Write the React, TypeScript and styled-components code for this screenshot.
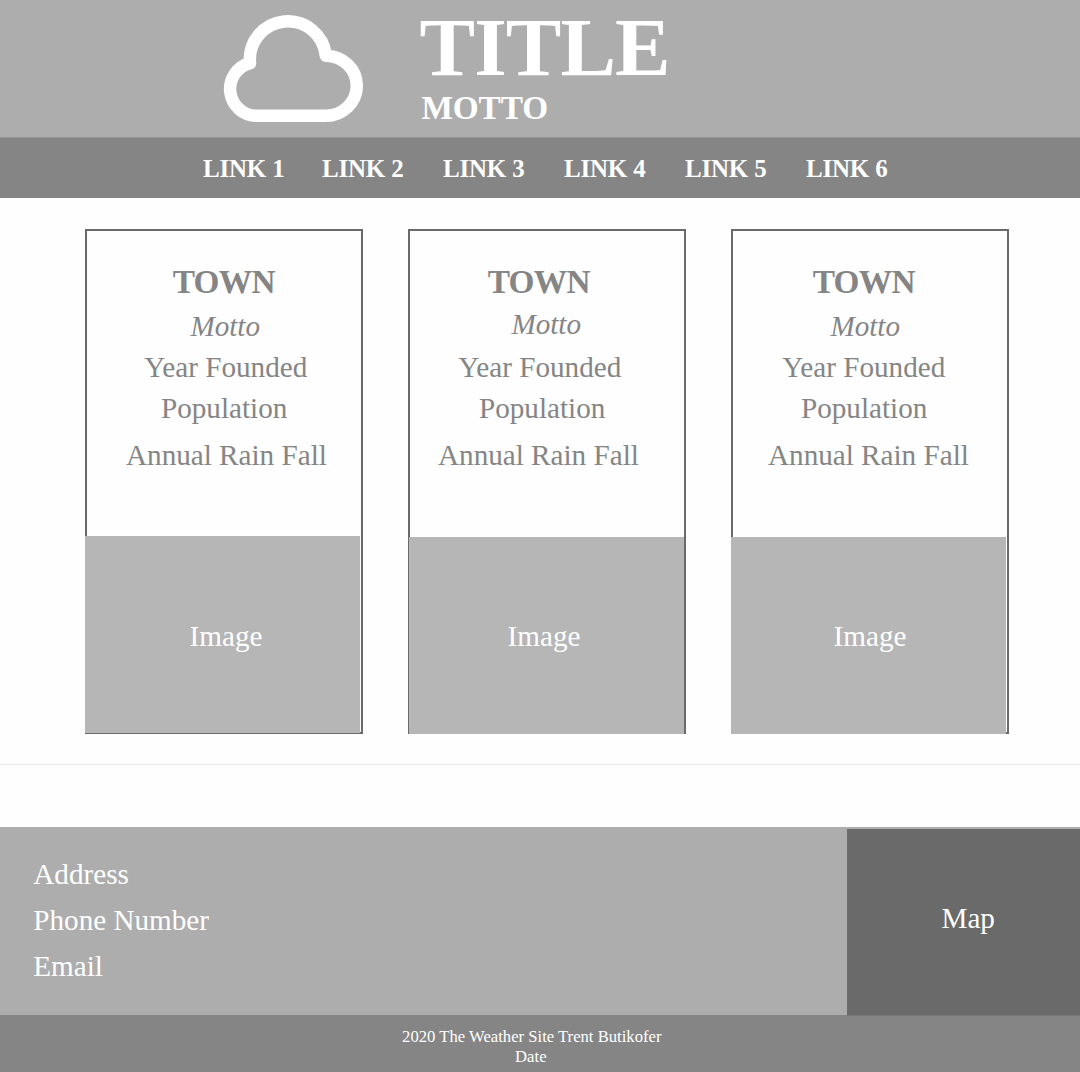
import React from "react";
import styled, { createGlobalStyle } from "styled-components";

const GlobalStyle = createGlobalStyle`
  * { box-sizing: border-box; }
  body { margin: 0; background: #fefefe; font-family: "Liberation Serif", "Times New Roman", serif; }
  h1, h2, p { margin: 0; font-weight: inherit; }
`;

const Page = styled.div`
  width: 1080px;
  height: 1072px;
  display: flex;
  flex-direction: column;
  overflow: hidden;
`;

const Header = styled.header`
  height: 138px;
  background: #adadad;
  border-bottom: 1px solid #949494;
  display: flex;
  align-items: flex-start;
  gap: 56px;
  padding: 15px 0 0 223px;
  color: #fff;
`;

const Logo = styled.svg`
  width: 141px;
  height: 108px;
  flex: none;
`;

const Brand = styled.div`
  display: flex;
  flex-direction: column;
  margin-top: -10px;
  font-weight: bold;
`;

const Title = styled.h1`
  && { font-weight: bold; }
  font-size: 83.33px;
  line-height: 84px;
  letter-spacing: -0.9px;
  margin-left: -0.5px;
`;

const Tagline = styled.p`
  font-size: 33.33px;
  line-height: 38px;
  margin-left: 1.4px;
  letter-spacing: -0.1px;
`;

const Nav = styled.nav`
  height: 60px;
  background: #858585;
  display: flex;
  padding-left: 203px;
`;

const NavLink = styled.a<{ $width: number }>`
  width: ${(p) => p.$width}px;
  color: #fff;
  font-size: 25px;
  font-weight: bold;
  line-height: 62px;
  letter-spacing: -0.2px;
  white-space: nowrap;
`;

const Cards = styled.main`
  display: flex;
  gap: 45px;
  height: 567px;
  padding: 31px 0 0 85px;
  border-bottom: 1px solid #e8e8e8;
`;

const Card = styled.article`
  width: 278px;
  height: 505px;
  border: 2px solid #6a6a6a;
  padding-top: 31px;
  display: flex;
  flex-direction: column;
  color: #858585;
`;

const TownName = styled.h2<{ $indent: number }>`
  && { font-weight: bold; }
  font-size: 33.33px;
  line-height: 40px;
  letter-spacing: -0.7px;
  margin-left: ${(p) => p.$indent}px;
`;

const Line = styled.p<{ $indent: number; $gap: number; $italic?: boolean }>`
  font-size: 29.17px;
  line-height: 32px;
  font-style: ${(p) => (p.$italic ? "italic" : "normal")};
  margin-top: ${(p) => p.$gap}px;
  margin-left: ${(p) => p.$indent}px;
  white-space: nowrap;
`;

const Photo = styled.div<{ $shift: number; $gap: number; $indent: number; $drop: number }>`
  width: 275px;
  height: 197px;
  flex: none;
  margin-top: ${(p) => p.$gap}px;
  margin-left: ${(p) => p.$shift}px;
  padding: ${(p) => p.$drop}px 0 0 ${(p) => p.$indent}px;
  background: #b6b6b6;
  color: #fff;
  font-size: 29.17px;
  line-height: 32px;
`;

const Contact = styled.section`
  height: 188px;
  margin-top: 62px;
  background: #adadad;
  color: #fff;
  display: flex;
  justify-content: space-between;
`;

const ContactList = styled.div`
  padding: 24px 0 0 33.3px;
  font-size: 29.17px;
  line-height: 46px;
`;

const MapBox = styled.div`
  position: relative;
  width: 233px;
  height: 187px;
  margin-top: 2px;
  padding: 73px 0 0 94.5px;
  background: #6a6a6a;
  border-bottom: 1px solid #787878;
  font-size: 29.17px;
  line-height: 32px;
`;

const Footer = styled.footer`
  height: 57px;
  background: #858585;
  color: #fff;
  padding: 12px 16.4px 0 0;
  font-size: 16.67px;
  line-height: 20px;
  text-align: center;
`;

const FooterDate = styled.p`
  padding-right: 2px;
`;

const links = [
  { label: "LINK 1", width: 119 },
  { label: "LINK 2", width: 121 },
  { label: "LINK 3", width: 121 },
  { label: "LINK 4", width: 121 },
  { label: "LINK 5", width: 121 },
  { label: "LINK 6", width: 90 },
];

// Left indents of the five lines of each card, then the offsets of its photo.
const towns = [
  { text: [85.7, 103.4, 57.2, 74, 39], mottoGap: 8, photo: { shift: -2, gap: 65, indent: 104.6, drop: 84 } },
  { text: [77.7, 101.4, 48.2, 69, 28], mottoGap: 6, photo: { shift: -1, gap: 66, indent: 98.6, drop: 83 } },
  { text: [79.7, 97.4, 49.2, 68, 35], mottoGap: 8, photo: { shift: -2, gap: 66, indent: 102.6, drop: 83 } },
];

function Cloud() {
  return (
    <Logo viewBox="223 15 141 108" fill="none" stroke="#fff" strokeWidth="12.5" strokeLinejoin="round">
      <path d="M250 63.1 A38 38 0 0 1 325.8 55.7 A31 30.1 0 0 1 356.8 85.8 A31 30.1 0 0 1 325.8 115.8 H257 A26.8 26.8 0 0 1 250 63.1 Z" />
    </Logo>
  );
}

export default function App() {
  return (
    <Page>
      <GlobalStyle />
      <Header>
        <Cloud />
        <Brand>
          <Title>TITLE</Title>
          <Tagline>MOTTO</Tagline>
        </Brand>
      </Header>
      <Nav>
        {links.map((l) => (
          <NavLink key={l.label} $width={l.width}>{l.label}</NavLink>
        ))}
      </Nav>
      <Cards>
        {towns.map(({ text, mottoGap, photo }, i) => (
          <Card key={i}>
            <TownName $indent={text[0]}>TOWN</TownName>
            <Line $italic $indent={text[1]} $gap={mottoGap}>Motto</Line>
            <Line $indent={text[2]} $gap={17 - mottoGap}>Year Founded</Line>
            <Line $indent={text[3]} $gap={9}>Population</Line>
            <Line $indent={text[4]} $gap={15}>Annual Rain Fall</Line>
            <Photo $shift={photo.shift} $gap={photo.gap} $indent={photo.indent} $drop={photo.drop}>Image</Photo>
          </Card>
        ))}
      </Cards>
      <Contact>
        <ContactList>
          <p>Address</p>
          <p>Phone Number</p>
          <p>Email</p>
        </ContactList>
        <MapBox>Map</MapBox>
      </Contact>
      <Footer>
        <p>2020 The Weather Site Trent Butikofer</p>
        <FooterDate>Date</FooterDate>
      </Footer>
    </Page>
  );
}
